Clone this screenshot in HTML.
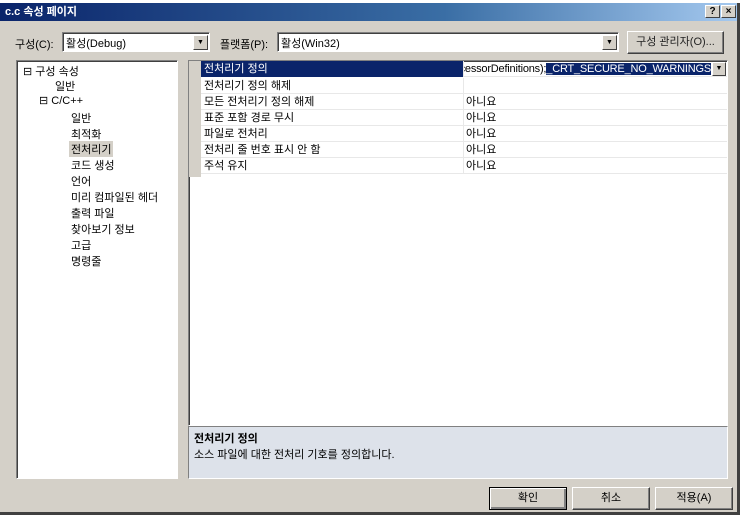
<!DOCTYPE html>
<html><head><meta charset="utf-8"><style>
*{margin:0;padding:0;box-sizing:border-box}
body{width:740px;height:515px;background:#d4d0c8;font-family:"Liberation Sans","Noto Sans CJK KR","NanumGothic",sans-serif;font-size:11px;color:#000;position:relative;overflow:hidden}
.a{position:absolute}
.title{left:0;top:3px;width:740px;height:18px;background:linear-gradient(90deg,#0a246a,#3a6ea5 60%,#a6caf0);color:#fff;font-weight:bold;font-size:11px;line-height:18px;padding-left:5px}
.tb{top:5px;width:15px;height:13px;background:#d4d0c8;border:1px solid;border-color:#fff #404040 #404040 #fff;color:#000;font-size:10px;font-weight:bold;text-align:center;line-height:11px}
.sunken{border:1px solid;border-color:#808080 #fff #fff #808080;background:#fff;box-shadow:inset 1px 1px 0 #404040}
.btn{background:#d4d0c8;border:1px solid;border-color:#fff #404040 #404040 #fff;box-shadow:inset -1px -1px 0 #808080;text-align:center;line-height:20px}
.dd{width:15px;height:15px;background:#d4d0c8;border:1px solid;border-color:#fff #404040 #404040 #fff;font-size:7px;text-align:center;line-height:13px}
.t{position:absolute;white-space:nowrap}
.row{position:absolute;left:12px;width:526px;height:16px;border-bottom:1px solid #e8e8e8;line-height:16px}
.row span{position:absolute;left:3px}
.row b{font-weight:normal;position:absolute;left:263px;padding-left:2px}
.row:after{content:"";position:absolute;left:262px;top:0;height:16px;border-left:1px solid #e8e8e8}
</style></head><body>
<div class="a" style="left:0;top:0;width:740px;height:3px;background:#fff"></div>
<div class="a title">c.c 속성 페이지</div>
<div class="a tb" style="left:705px">?</div>
<div class="a tb" style="left:721px">×</div>
<div class="t" style="left:15px;top:36px">구성(C):</div>
<div class="a sunken" style="left:62px;top:32px;width:148px;height:20px"><span class="t" style="left:3px;top:2px">활성(Debug)</span></div>
<div class="a dd" style="left:193px;top:35px">▼</div>
<div class="t" style="left:220px;top:36px">플랫폼(P):</div>
<div class="a sunken" style="left:277px;top:32px;width:342px;height:20px"><span class="t" style="left:3px;top:2px">활성(Win32)</span></div>
<div class="a dd" style="left:602px;top:35px">▼</div>
<div class="a btn" style="left:627px;top:31px;width:97px;height:23px;line-height:21px;color:#222">구성 관리자(O)...</div>

<div class="a sunken" style="left:16px;top:60px;width:162px;height:419px">
<div class="t" style="left:6px;top:2px">⊟ 구성 속성</div>
<div class="t" style="left:38px;top:17px">일반</div>
<div class="t" style="left:22px;top:33px">⊟ C/C++</div>
<div class="t" style="left:54px;top:49px">일반</div>
<div class="t" style="left:54px;top:65px">최적화</div>
<div class="t" style="left:52px;top:80px;background:#d4d0c8;padding:0 2px">전처리기</div>
<div class="t" style="left:54px;top:96px">코드 생성</div>
<div class="t" style="left:54px;top:112px">언어</div>
<div class="t" style="left:54px;top:128px">미리 컴파일된 헤더</div>
<div class="t" style="left:54px;top:144px">출력 파일</div>
<div class="t" style="left:54px;top:160px">찾아보기 정보</div>
<div class="t" style="left:54px;top:176px">고급</div>
<div class="t" style="left:54px;top:192px">명령줄</div>
</div>

<div class="a sunken" style="left:188px;top:60px;width:540px;height:366px">
<div class="a" style="left:0;top:0;width:12px;height:116px;background:#d4d0c8"></div>
<div class="row" style="top:0"><span style="left:0;width:262px;background:#0a246a;color:#fff;padding-left:3px">전처리기 정의</span><div style="position:absolute;left:263px;top:0;width:247px;height:16px;overflow:hidden"><div style="position:absolute;right:0;top:0;white-space:nowrap;letter-spacing:-0.2px">processorDefinitions);<i style="font-style:normal;background:#0a246a;color:#fff">_CRT_SECURE_NO_WARNINGS</i></div></div><div class="dd" style="position:absolute;left:511px;top:1px;height:14px;width:14px;line-height:12px">▼</div></div>
<div class="row" style="top:17px"><span>전처리기 정의 해제</span></div>
<div class="row" style="top:33px"><span>모든 전처리기 정의 해제</span><b>아니요</b></div>
<div class="row" style="top:49px"><span>표준 포함 경로 무시</span><b>아니요</b></div>
<div class="row" style="top:65px"><span>파일로 전처리</span><b>아니요</b></div>
<div class="row" style="top:81px"><span>전처리 줄 번호 표시 안 함</span><b>아니요</b></div>
<div class="row" style="top:97px"><span>주석 유지</span><b>아니요</b></div>
</div>
<div class="a" style="left:188px;top:426px;width:540px;height:53px;background:#dde2ea;border:1px solid;border-color:#808080 #fff #fff #808080">
<div class="t" style="left:5px;top:3px;font-weight:bold">전처리기 정의</div>
<div class="t" style="left:5px;top:19px">소스 파일에 대한 전처리 기호를 정의합니다.</div>
</div>
<div class="a btn" style="left:489px;top:487px;width:78px;height:23px;border:1px solid #000;box-shadow:inset 1px 1px 0 #fff,inset -2px -2px 0 #808080">확인</div>
<div class="a btn" style="left:572px;top:487px;width:78px;height:23px">취소</div>
<div class="a btn" style="left:655px;top:487px;width:78px;height:23px">적용(A)</div>
<div class="a" style="left:737px;top:3px;width:3px;height:512px;background:#404040"></div>
<div class="a" style="left:0;top:512px;width:740px;height:3px;background:#404040"></div>
</body></html>
